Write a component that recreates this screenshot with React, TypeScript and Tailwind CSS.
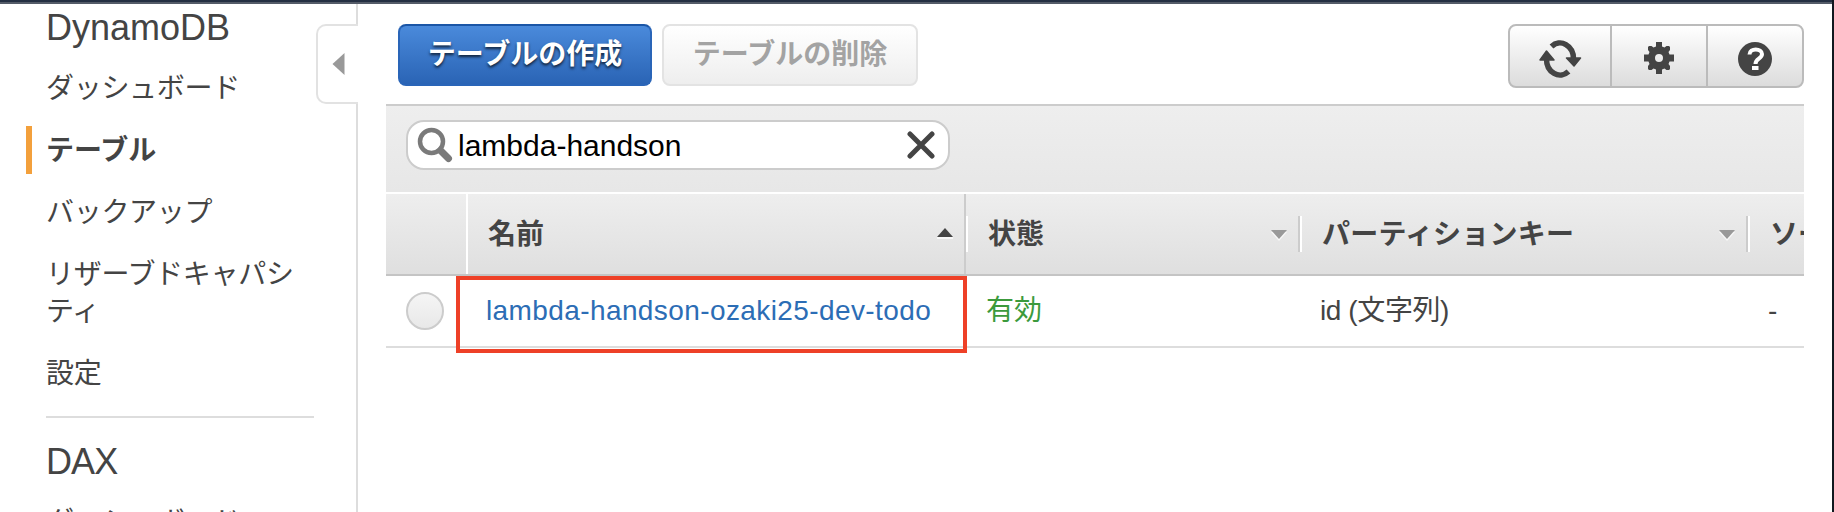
import React from "react";

const FONT =
  "font-['Liberation_Sans','Noto_Sans_CJK_JP',sans-serif]";

function NavItem({ children, active }: { children: React.ReactNode; active?: boolean }) {
  return (
    <li className="mb-[14px] flex">
      <span className={active ? "w-1.5 bg-[#f3a03c]" : "w-1.5"} />
      <a
        className={
          active
            ? "block w-[272px] pt-1.5 pb-[5px] pl-3.5 font-bold"
            : "block w-[272px] pt-1.5 pb-[5px] pl-3.5 tracking-[-0.3px]"
        }
      >
        {children}
      </a>
    </li>
  );
}

function SortDown() {
  return (
    <svg width="18" height="12" viewBox="0 0 18 12" className="mt-0.5 shrink-0">
      <path d="M1 3h16L9 12z" fill="#f8f8f8" />
      <path d="M1 1h16L9 10z" fill="#999" />
    </svg>
  );
}

function Separator() {
  return <span className="h-9 w-1 shrink-0 border-l-2 border-[#ccc] bg-white" />;
}

function Sidebar() {
  return (
    <aside className="flex h-[508px] w-[358px] shrink-0 overflow-hidden">
      <nav className="w-[316px] shrink-0 pl-[26px] text-[28px] leading-[37px]">
        <h2 className="mt-[5px] h-[53px] pl-5 text-[36px] leading-[38px]">DynamoDB</h2>
        <ul className="mt-[2px]">
          <NavItem>ダッシュボード</NavItem>
          <NavItem active>テーブル</NavItem>
          <NavItem>バックアップ</NavItem>
          <NavItem>リザーブドキャパシティ</NavItem>
          <NavItem>設定</NavItem>
        </ul>
        <hr className="mt-[19px] mr-0.5 ml-5 border-0 border-t-2 border-[#ddd]" />
        <h2 className="mt-[25px] h-[53px] pl-5 text-[36px] leading-[38px] tracking-[-0.9px]">DAX</h2>
        <ul className="mt-[2px]">
          <NavItem>ダッシュボード</NavItem>
        </ul>
      </nav>
      <div className="flex w-[42px] shrink-0 flex-col">
        <div className="h-5 border-r-2 border-[#ddd]" />
        <button className="flex h-20 items-center rounded-l-[10px] border-2 border-r-0 border-[#e2e2e2] bg-white pl-3.5">
          <svg width="13" height="24" viewBox="0 0 13 24">
            <path d="M12.500 1v22L0.500 12z" fill="#999" />
          </svg>
        </button>
        <div className="flex-1 border-r-2 border-[#ddd]" />
      </div>
    </aside>
  );
}

function Toolbar() {
  return (
    <div className="flex h-[100px] items-start pt-5 pl-3">
      <button className="h-[62px] w-[254px] rounded-[8px] border-2 border-[#2a65b8] border-t-[#1b56a6] bg-linear-to-b from-[#4a8adb] to-[#2a64b5] text-[28px] leading-none font-bold text-white [text-shadow:0_2px_3px_#000b]">
        テーブルの作成
      </button>
      <button className="ml-2.5 h-[62px] w-[256px] rounded-[8px] border-2 border-[#e3e3e3] bg-linear-to-b from-white to-[#eee] text-[28px] leading-none font-bold text-[#a3a3a3]">
        テーブルの削除
      </button>
      <div className="ml-auto flex h-16 w-[296px] overflow-hidden rounded-[8px] border-2 border-[#bbb] bg-linear-to-b from-white to-[#dcdcdc]">
        <button className="flex w-[102px] shrink-0 justify-center border-r-2 border-[#bbb] pt-[13px]">
          <svg width="44" height="40" viewBox="0 0 44 40" fill="none" stroke="#444" strokeWidth="5.500">
            <path d="M13.500 7.500A13.500 15.800 0 0 1 35.500 20" />
            <path d="M30.500 32.500A13.500 15.800 0 0 1 8.500 20" />
            <path d="M28.500 19h14l-6.500 8z" fill="#444" stroke="#444" strokeWidth="1.500" strokeLinejoin="round" />
            <path d="M2 21h14L8.500 12z" fill="#444" stroke="#444" strokeWidth="1.500" strokeLinejoin="round" />
          </svg>
        </button>
        <button className="flex w-24 shrink-0 justify-center border-r-2 border-[#bbb] pt-4">
          <svg width="30" height="32" viewBox="0 0 30 32" fill="#444">
            <path
              fillRule="evenodd"
              d="M12 0h6v4.500l2.500 1L22.500 4H25l1 1v3l-1.500 2 1 2.500H30v7h-4.500l-1 2.500 1.500 2v3l-1 1h-2.500l-2-1.500-2.500 1V32h-6v-4.500l-2.500-1-2 1.500H5l-1-1v-3l1.500-2-1-2.500H0v-7h4.500l1-2.500L4 8V5l1-1h2.500l2 1.500 2.500-1zM15 12a4 4 0 1 0 0 8a4 4 0 1 0 0-8z"
            />
          </svg>
        </button>
        <button className="flex flex-1 justify-center pt-4">
          <svg width="34" height="34" viewBox="0 0 34 34">
            <circle cx="17" cy="17" r="17" fill="#444" />
            <path d="M11.500 12.500C11.500 5.500 24 6 24 12C24 17 17.500 16.500 17.500 22" fill="none" stroke="#fff" strokeWidth="4" />
            <path d="M14 24h6.500v4H14z" fill="#fff" />
          </svg>
        </button>
      </div>
    </div>
  );
}

function SearchBar() {
  return (
    <div className="h-[88px] border-t-2 border-[#ccc] bg-linear-to-b from-[#eee] to-[#e7e7e7] pt-3.5 pl-5">
      <div className="flex h-[50px] w-[544px] items-center rounded-[18px] border-2 border-[#ccc] bg-white pr-[13px] pl-[9px]">
        <svg width="36" height="36" viewBox="0 0 36 36" fill="none" stroke="#7a7a7a">
          <circle cx="14.500" cy="14.500" r="11.500" strokeWidth="4.500" />
          <path d="M23.500 23.500l8 8" strokeWidth="7" strokeLinecap="round" />
        </svg>
        <span className="ml-[5px] pt-0.5 text-[30px] leading-[44px] text-black">lambda-handson</span>
        <svg width="28" height="28" viewBox="0 0 28 28" className="ml-auto" stroke="#444" strokeWidth="5" strokeLinecap="round">
          <path d="M3 3l22 22M25 3L3 25" />
        </svg>
      </div>
    </div>
  );
}

function Table() {
  return (
    <div className="mt-0.5 w-[1418px] overflow-hidden text-[28px] leading-[40px] whitespace-nowrap">
      <div className="flex h-[82px] border-b-2 border-[#c4c4c4] bg-linear-to-b from-[#eee] to-[#dfdfdf] font-bold">
        <div className="w-20 shrink-0" />
        <div className="flex w-[500px] shrink-0 items-center border-r-2 border-l-2 border-r-[#ccc] border-l-white pr-[10px] pl-5">
          <span className="pt-0.5">名前</span>
          <svg width="18" height="12" viewBox="0 0 18 12" className="mb-0.5 ml-auto">
            <path d="M1 12h16v-2H1z" fill="#f8f8f8" />
            <path d="M1 10h16L9 1z" fill="#444" />
          </svg>
        </div>
        <div className="flex w-[332px] shrink-0 items-center justify-between">
          <span className="h-9 w-0.5 bg-white" />
          <span className="mr-auto ml-5 pt-0.5">状態</span>
          <SortDown />
          <span className="w-2.5" />
        </div>
        <div className="flex w-[448px] shrink-0 items-center">
          <Separator />
          <span className="mr-auto ml-5 pt-0.5 tracking-[0.2px]">パーティションキー</span>
          <SortDown />
          <span className="w-2.5" />
        </div>
        <div className="flex shrink-0 items-center">
          <Separator />
          <span className="ml-5 pt-0.5">ソート</span>
        </div>
      </div>
      <div className="flex h-[72px] border-b-2 border-[#ddd] pt-[15px]">
        <div className="w-20 shrink-0 pt-px pl-5">
          <span className="block size-[38px] rounded-full border-2 border-[#ccc] bg-linear-to-b from-[#f5f5f5] to-[#e8e8e8]" />
        </div>
        <a className="w-[500px] shrink-0 pl-5 tracking-[0.4px] text-[#2c6db5]">lambda-handson-ozaki25-dev-todo</a>
        <span className="w-[332px] shrink-0 pl-5 text-[#3c9a3c]">有効</span>
        <span className="w-[448px] shrink-0 pl-[22px] tracking-[-0.4px]">id (文字列)</span>
        <span className="pl-[22px]">-</span>
      </div>
    </div>
  );
}

export default function App() {
  return (
    <div className={`${FONT} relative h-[512px] w-[1834px] overflow-hidden border-r-2 border-[#11181f] bg-white text-[#444]`}>
      <div className="h-1 border-b-2 border-[#545b68] bg-[#242f42]" />
      <div className="flex">
        <Sidebar />
        <main className="ml-7 w-[1418px]">
          <Toolbar />
          <SearchBar />
          <Table />
        </main>
      </div>
      <div className="absolute top-[276px] left-[456px] h-[77px] w-[511px] border-4 border-[#ee4027]" />
    </div>
  );
}
